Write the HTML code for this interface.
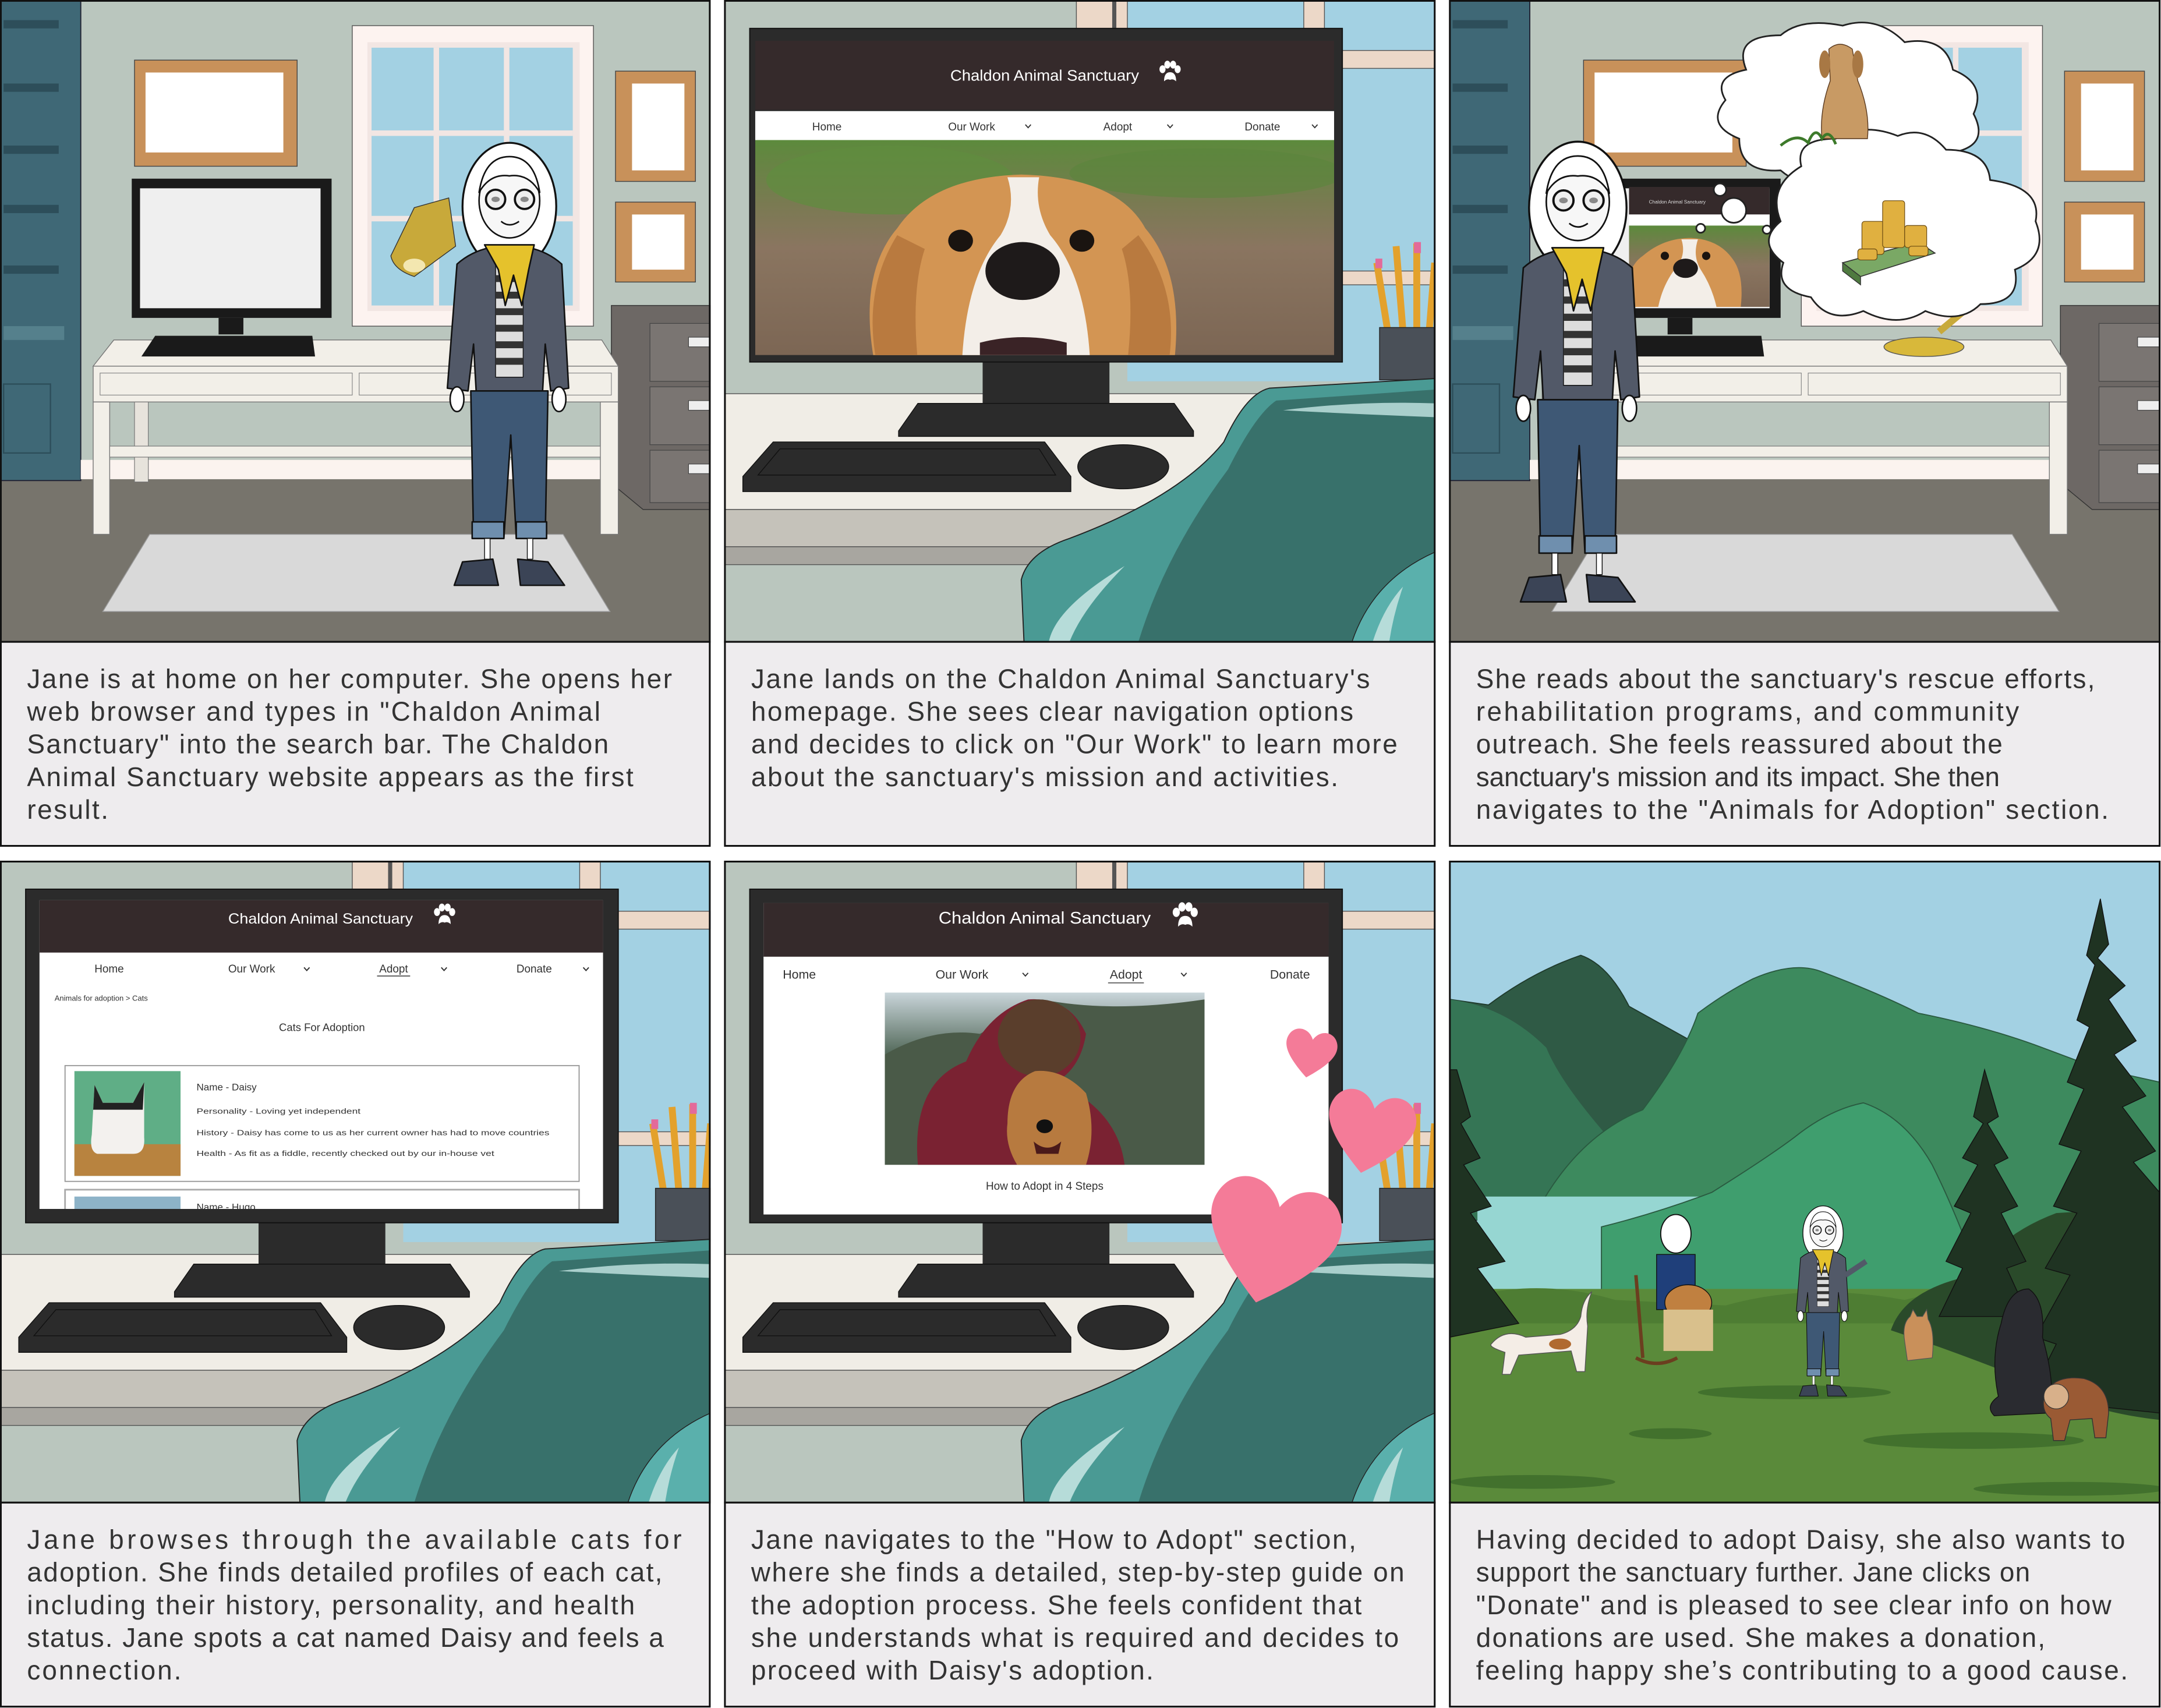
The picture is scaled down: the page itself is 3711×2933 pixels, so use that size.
<!DOCTYPE html>
<html><head><meta charset="utf-8"><style>
html,body{margin:0;padding:0;background:#fff}
svg{display:block}
.cap{font-family:"Liberation Sans",sans-serif;font-size:19.4px;fill:#333}
.ws{font-family:"Liberation Sans",sans-serif}
</style></head><body>
<svg xmlns="http://www.w3.org/2000/svg" xmlns:xlink="http://www.w3.org/1999/xlink" width="3711" height="2933" viewBox="0 0 1568 1239" preserveAspectRatio="none">
<defs>
<clipPath id="pc"><rect x="0" y="0" width="515" height="465"/></clipPath>
<clipPath id="dogc"><rect x="22" y="101" width="420" height="156"/></clipPath>
<clipPath id="s4"><rect x="28" y="28" width="409" height="224"/></clipPath>
<clipPath id="ph5"><rect x="116" y="95" width="232" height="125"/></clipPath>
<clipPath id="mini"><rect x="130" y="163" width="102" height="59"/></clipPath>
<linearGradient id="dogbg" x1="0" y1="0" x2="0" y2="1"><stop offset="0" stop-color="#5c8a3c"/><stop offset="0.3" stop-color="#7a7a52"/><stop offset="0.5" stop-color="#8a7560"/><stop offset="1" stop-color="#7c6654"/></linearGradient>
<linearGradient id="mtbg" x1="0" y1="0" x2="0" y2="1"><stop offset="0" stop-color="#c9d5da"/><stop offset="0.35" stop-color="#556b5c"/><stop offset="1" stop-color="#4a5a40"/></linearGradient>

<g id="paw" fill="#fff"><ellipse cx="-5" cy="-4" rx="2" ry="2.6"/><ellipse cx="-1.8" cy="-7" rx="2" ry="2.6"/><ellipse cx="2" cy="-7" rx="2" ry="2.6"/><ellipse cx="5" cy="-4" rx="2" ry="2.6"/><path d="M-4,4 Q-4,-2 0,-2 Q4,-2 4,4 Q2,2 0,3 Q-2,2 -4,4Z"/></g>

<g id="chev"><path d="M-2,-1.2 L0,1 L2,-1.2" fill="none" stroke="#333" stroke-width="0.8"/></g>

<g id="heart"><path d="M50,92 C12,62 0,42 8,24 C16,6 40,6 50,26 C60,6 84,6 92,24 C100,42 88,62 50,92 Z"/></g>

<!-- room (panels 1 & 3) -->
<g id="room">
<rect width="515" height="465" fill="#bac6be"/>
<rect y="347" width="515" height="118" fill="#77746c"/>
<rect x="0" y="0" width="58" height="348" fill="#3f6876" stroke="#223" stroke-width="0.8"/>
<rect x="2" y="14" width="40" height="6" fill="#2d4e5a"/>
<rect x="2" y="60" width="40" height="6" fill="#2d4e5a"/>
<rect x="2" y="105" width="40" height="6" fill="#2d4e5a"/>
<rect x="2" y="148" width="40" height="6" fill="#2d4e5a"/>
<rect x="2" y="192" width="40" height="6" fill="#2d4e5a"/>
<rect x="2" y="236" width="44" height="10" fill="#55808c"/>
<rect x="2" y="278" width="34" height="50" fill="none" stroke="#2d4e5a"/>
<rect x="58" y="333" width="400" height="14" fill="#fbf3ef"/>
<!-- window -->
<rect x="255" y="18" width="175" height="218" fill="#fdf3f0" stroke="#555" stroke-width="0.6"/>
<rect x="266" y="30" width="154" height="195" fill="#f2e6e3"/>
<rect x="269" y="34" width="146" height="187" fill="#a3d1e3"/>
<rect x="314" y="34" width="4" height="187" fill="#f2e6e3"/>
<rect x="365" y="34" width="4" height="187" fill="#f2e6e3"/>
<rect x="269" y="94" width="146" height="4" fill="#f2e6e3"/>
<rect x="269" y="156" width="146" height="4" fill="#f2e6e3"/>
<!-- frames -->
<rect x="97" y="43" width="118" height="77" fill="#c8915a" stroke="#444" stroke-width="0.6"/>
<rect x="105" y="52" width="100" height="58" fill="#fff"/>
<rect x="446" y="51" width="58" height="80" fill="#c8915a" stroke="#444" stroke-width="0.6"/>
<rect x="458" y="60" width="38" height="63" fill="#fff"/>
<rect x="446" y="146" width="58" height="58" fill="#c8915a" stroke="#444" stroke-width="0.6"/>
<rect x="458" y="155" width="38" height="40" fill="#fff"/>
<!-- cabinet -->
<path d="M443,221 L515,221 L515,369 L466,369 L443,350 Z" fill="#6d6865" stroke="#333" stroke-width="0.6"/>
<rect x="471" y="234" width="44" height="42" fill="#7a7572" stroke="#444" stroke-width="0.5"/>
<rect x="471" y="280" width="44" height="42" fill="#7a7572" stroke="#444" stroke-width="0.5"/>
<rect x="471" y="326" width="44" height="38" fill="#7a7572" stroke="#444" stroke-width="0.5"/>
<rect x="499" y="244" width="16" height="7" fill="#eee" stroke="#444" stroke-width="0.5"/>
<rect x="499" y="290" width="16" height="7" fill="#eee" stroke="#444" stroke-width="0.5"/>
<rect x="499" y="336" width="16" height="7" fill="#eee" stroke="#444" stroke-width="0.5"/>
<!-- monitor -->
<rect x="95" y="129" width="145" height="101" fill="#1a1a1a"/>
<rect x="101" y="136" width="131" height="87" fill="#efefef"/>
<rect x="158" y="230" width="18" height="12" fill="#1a1a1a"/>
<!-- desk -->
<path d="M82,246 L436,246 L448,265 L67,265 Z" fill="#f2efe8" stroke="#777" stroke-width="0.6"/>
<polygon points="102,258 228,258 226,243 112,243" fill="#1a1a1a"/>
<rect x="67" y="265" width="381" height="26" fill="#f2efe8" stroke="#777" stroke-width="0.6"/>
<rect x="72" y="270" width="183" height="16" fill="none" stroke="#888" stroke-width="0.5"/>
<rect x="260" y="270" width="183" height="16" fill="none" stroke="#888" stroke-width="0.5"/>
<rect x="67" y="291" width="12" height="96" fill="#f2efe8" stroke="#777" stroke-width="0.6"/>
<rect x="435" y="291" width="13" height="96" fill="#f2efe8" stroke="#777" stroke-width="0.6"/>
<rect x="97" y="291" width="10" height="58" fill="#e7e3dc" stroke="#777" stroke-width="0.5"/>
<rect x="79" y="323" width="356" height="8" fill="#f2efe8" stroke="#777" stroke-width="0.5"/>
<!-- rug -->
<polygon points="108,387 408,387 442,443 74,443" fill="#d9d9d9" stroke="#999" stroke-width="0.6"/>
</g>

<!-- desk scene (panels 2,4,5) -->
<g id="desk">
<rect width="515" height="465" fill="#bac6be"/>
<rect x="292" y="0" width="223" height="276" fill="#a3d1e3"/>
<rect x="255" y="0" width="37" height="22" fill="#ecd8c8" stroke="#555" stroke-width="0.6"/>
<rect x="281" y="0" width="3" height="22" fill="#555"/>
<rect x="420" y="0" width="15" height="22" fill="#ecd8c8" stroke="#555" stroke-width="0.6"/>
<rect x="448" y="36" width="67" height="13" fill="#ecd8c8" stroke="#555" stroke-width="0.6"/>
<rect x="448" y="196" width="67" height="10" fill="#ecd8c8" stroke="#555" stroke-width="0.6"/>
<line x1="481" y1="240" x2="473" y2="190" stroke="#e3a12c" stroke-width="5"/>
<line x1="492" y1="240" x2="487" y2="178" stroke="#e3a12c" stroke-width="5"/>
<line x1="502" y1="240" x2="502" y2="176" stroke="#e3a12c" stroke-width="5"/>
<line x1="511" y1="240" x2="515" y2="190" stroke="#e3a12c" stroke-width="5"/>
<rect x="472" y="187" width="5" height="7" fill="#e36a9a"/>
<rect x="500" y="175" width="5" height="8" fill="#e36a9a"/>
<rect x="475" y="237" width="40" height="38" fill="#4a5058" stroke="#222" stroke-width="0.6"/>
<rect x="0" y="285" width="515" height="84" fill="#f0ede6" stroke="#555" stroke-width="0.6"/>
<rect x="0" y="369" width="515" height="27" fill="#c5c2ba" stroke="#555" stroke-width="0.6"/>
<rect x="0" y="396" width="515" height="13" fill="#a8a6a0" stroke="#555" stroke-width="0.6"/>
<rect x="187" y="262" width="92" height="33" fill="#2b2b2b"/>
<polygon points="140,292 326,292 340,312 340,316 126,316 126,312" fill="#2b2b2b" stroke="#111" stroke-width="0.6"/>
<polygon points="35,320 232,320 251,345 251,356 13,356 13,345" fill="#2b2b2b" stroke="#111" stroke-width="0.6"/>
<polygon points="40,325 228,325 240,344 24,344" fill="none" stroke="#111" stroke-width="0.6"/>
<ellipse cx="289" cy="338" rx="33" ry="16" fill="#2b2b2b" stroke="#111" stroke-width="0.6"/>
<rect x="18" y="20" width="430" height="242" fill="#2b2b2b" stroke="#111" stroke-width="0.8"/>
<!-- chair -->
<path d="M217,465 L215,420 Q220,400 250,390 Q330,360 362,320 Q378,285 395,281 L515,274 L515,465 Z" fill="#4a9a94" stroke="#222" stroke-width="0.8"/>
<path d="M300,465 Q320,400 365,340 Q385,300 400,290 L515,282 L515,465 Z" fill="#38716b"/>
<path d="M405,297 Q460,290 515,292 L515,302 Q460,300 405,297Z" fill="#a9cfcc"/>
<path d="M235,465 Q240,440 290,410 Q260,440 250,465Z" fill="#b6dcd9"/>
<path d="M455,465 Q470,420 515,400 L515,465 Z" fill="#5ab0ac" stroke="#222" stroke-width="0.6"/>
<path d="M470,465 Q478,440 492,425 Q485,445 482,465Z" fill="#b6dcd9"/>
</g>

<!-- Jane -->
<g id="jane" stroke="#111" stroke-width="1.1" stroke-linejoin="round">
<ellipse cx="46" cy="50" rx="34" ry="46" fill="#fff" stroke-width="1.4"/>
<ellipse cx="46" cy="46" rx="22" ry="27" fill="#f7f7f7"/>
<path d="M24,40 Q28,14 46,14 Q64,14 68,40 Q60,26 46,28 Q32,26 24,40Z" fill="#fff"/>
<circle cx="36" cy="45" r="7" fill="#eee" stroke-width="1.6"/>
<circle cx="57" cy="45" r="7" fill="#eee" stroke-width="1.6"/>
<ellipse cx="36" cy="45" rx="3" ry="2" fill="#888" stroke="none"/>
<ellipse cx="57" cy="45" rx="3" ry="2" fill="#888" stroke="none"/>
<path d="M40,61 Q46,66 53,61" fill="none"/>
<path d="M8,92 Q18,83 32,80 L60,80 Q74,83 84,92 L89,182 L76,184 L72,150 L70,186 L22,186 L20,150 L16,184 L1,182 Z" fill="#525968"/>
<rect x="36" y="88" width="20" height="86" fill="#ddd" stroke-width="0.6"/>
<g fill="#333" stroke="none"><rect x="36" y="100" width="20" height="5"/><rect x="36" y="112" width="20" height="5"/><rect x="36" y="124" width="20" height="5"/><rect x="36" y="136" width="20" height="5"/><rect x="36" y="148" width="20" height="5"/><rect x="36" y="160" width="20" height="5"/></g>
<path d="M28,78 L64,78 L60,96 L55,122 L49,100 L43,122 L38,96Z" fill="#e5c22c"/>
<ellipse cx="8" cy="190" rx="5" ry="9" fill="#fff"/>
<ellipse cx="82" cy="190" rx="5" ry="9" fill="#fff"/>
<path d="M18,184 L74,184 L72,291 L51,291 L47,216 L42,291 L20,291 Z" fill="#3e5875"/>
<rect x="19" y="279" width="23" height="12" fill="#6f8fae"/>
<rect x="51" y="279" width="22" height="12" fill="#6f8fae"/>
<rect x="28" y="291" width="4" height="15" fill="#fff" stroke-width="0.6"/>
<rect x="59" y="291" width="4" height="15" fill="#fff" stroke-width="0.6"/>
<path d="M6,325 L12,308 L34,306 L38,325 Z" fill="#3b4456"/>
<path d="M52,306 L74,308 L86,325 L54,325 Z" fill="#3b4456"/>
</g>

<g id="cloud" fill="#fff" stroke="#222" stroke-width="1.2">
<circle cx="0" cy="0" r="1"/>
</g>
</defs>

<!-- ================= PANEL 1 ================= -->
<g transform="translate(0.6,0.6)">
<g clip-path="url(#pc)">
<use xlink:href="#room"/>
<!-- lamp -->
<path d="M300,150 L325,143 L330,178 L300,200 Q285,195 283,185 Z" fill="#c8a93a" stroke="#333" stroke-width="0.6"/>
<ellipse cx="300" cy="192" rx="8" ry="5" fill="#f3e7b0"/>
<use xlink:href="#jane" transform="translate(323,99)"/>
</g>
<rect width="514.4" height="465" fill="none" stroke="#111" stroke-width="1.3"/>
<rect y="465" width="514.4" height="148" fill="#eeecee" stroke="#111" stroke-width="1.3"/>
<text class="cap" x="19" y="498.5" textLength="468" lengthAdjust="spacing">Jane is at home on her computer. She opens her</text>
<text class="cap" x="19" y="522.2" textLength="416" lengthAdjust="spacing">web browser and types in "Chaldon Animal</text>
<text class="cap" x="19" y="545.9" textLength="422" lengthAdjust="spacing">Sanctuary" into the search bar. The Chaldon</text>
<text class="cap" x="19" y="569.6" textLength="440" lengthAdjust="spacing">Animal Sanctuary website appears as the first</text>
<text class="cap" x="19" y="593.3" textLength="59" lengthAdjust="spacing">result.</text>
</g>

<!-- ================= PANEL 2 ================= -->
<g transform="translate(526,0.6)">
<g clip-path="url(#pc)">
<use xlink:href="#desk"/>
<rect x="22" y="29" width="420" height="50" fill="#352a2b"/>
<text class="ws" x="232" y="58" font-size="11" fill="#fff" text-anchor="middle" textLength="137" lengthAdjust="spacingAndGlyphs">Chaldon Animal Sanctuary</text>
<use xlink:href="#paw" transform="translate(323,54) scale(1.1)"/>
<rect x="22" y="80" width="420" height="21" fill="#fff"/>
<g class="ws" font-size="8" fill="#333" text-anchor="middle">
<text x="74" y="94">Home</text><text x="179" y="94">Our Work</text><text x="285" y="94">Adopt</text><text x="390" y="94">Donate</text></g>
<use xlink:href="#chev" transform="translate(220,91)"/><use xlink:href="#chev" transform="translate(323,91)"/><use xlink:href="#chev" transform="translate(428,91)"/>
<g clip-path="url(#dogc)">
<rect x="22" y="101" width="420" height="156" fill="url(#dogbg)"/>
<ellipse cx="120" cy="130" rx="90" ry="25" fill="#5f8d3e" opacity="0.7"/>
<ellipse cx="350" cy="125" rx="100" ry="18" fill="#5a853c" opacity="0.6"/>
<path d="M110,270 Q95,200 125,165 Q150,128 215,126 Q285,128 305,165 Q335,200 325,270 Z" fill="#d39553"/>
<path d="M125,170 Q100,210 110,262 L140,262 Q135,210 145,180Z" fill="#b97a3f"/>
<path d="M300,170 Q330,210 322,262 L292,262 Q298,210 288,180Z" fill="#b97a3f"/>
<path d="M205,128 Q212,150 200,170 Q175,200 172,262 L265,262 Q262,200 236,170 Q224,150 228,128Z" fill="#f3eee8"/>
<ellipse cx="216" cy="196" rx="27" ry="21" fill="#1e1a1a"/>
<ellipse cx="171" cy="174" rx="9" ry="8" fill="#1a1410"/>
<ellipse cx="259" cy="174" rx="9" ry="8" fill="#1a1410"/>
<path d="M185,248 Q216,240 248,248 L248,262 L185,262Z" fill="#3a2326"/>
</g>
</g>
<rect width="515" height="465" fill="none" stroke="#111" stroke-width="1.3"/>
<rect y="465" width="515" height="148" fill="#eeecee" stroke="#111" stroke-width="1.3"/>
<text class="cap" x="19" y="498.5" textLength="449" lengthAdjust="spacing">Jane lands on the Chaldon Animal Sanctuary's</text>
<text class="cap" x="19" y="522.2" textLength="437" lengthAdjust="spacing">homepage. She sees clear navigation options</text>
<text class="cap" x="19" y="545.9" textLength="469" lengthAdjust="spacing">and decides to click on "Our Work" to learn more</text>
<text class="cap" x="19" y="569.6" textLength="426" lengthAdjust="spacing">about the sanctuary's mission and activities.</text>
</g>

<!-- ================= PANEL 3 ================= -->
<g transform="translate(1052,0.6)">
<g clip-path="url(#pc)">
<use xlink:href="#room"/>
<!-- mini site on monitor -->
<rect x="130" y="135" width="102" height="20" fill="#352a2b"/>
<text class="ws" x="165" y="147" font-size="3.5" fill="#ddd" text-anchor="middle">Chaldon Animal Sanctuary</text>
<rect x="130" y="155" width="102" height="8" fill="#fff"/>
<g clip-path="url(#mini)">
<rect x="130" y="163" width="102" height="59" fill="url(#dogbg)"/>
<path d="M128,230 Q125,195 140,185 Q155,172 175,172 Q195,173 205,187 Q215,200 210,230Z" fill="#d39553"/>
<path d="M168,173 Q172,185 163,195 Q152,210 150,230 L195,230 Q192,210 182,195 Q176,185 180,173Z" fill="#f3eee8"/>
<ellipse cx="171" cy="194" rx="9" ry="7" fill="#1e1a1a"/>
<circle cx="156" cy="185" r="3" fill="#1a1410"/><circle cx="186" cy="185" r="3" fill="#1a1410"/>
</g>
<!-- lamp base -->
<path d="M355,240 L385,215" stroke="#c8a93a" stroke-width="5"/>
<ellipse cx="344" cy="251" rx="29" ry="7" fill="#d8b83a" stroke="#555" stroke-width="0.6"/>
<!-- thought bubbles -->
<g fill="#fff" stroke="#222" stroke-width="1.2">
<circle cx="196" cy="137" r="4.5"/><circle cx="206" cy="152" r="9"/><circle cx="182" cy="165" r="3.2"/><circle cx="230" cy="166" r="3"/>
<path d="M215,50 Q205,25 240,25 Q255,12 285,18 Q310,10 330,30 Q360,25 365,50 Q390,60 380,82 Q392,105 365,110 Q360,130 330,125 Q310,140 285,128 Q260,140 240,123 Q210,125 210,100 Q185,90 200,72 Q190,55 215,50Z"/>
<path d="M255,120 Q250,100 280,100 Q300,88 325,98 Q345,90 360,108 Q390,108 392,130 Q430,135 425,160 Q435,185 410,195 Q415,220 385,220 Q370,235 345,225 Q325,238 300,225 Q275,235 262,215 Q235,210 242,190 Q222,175 240,160 Q230,135 255,120Z"/>
</g>
<!-- dog in bubble -->
<path d="M275,35 Q283,28 292,35 L296,58 Q305,80 303,100 L270,100 Q268,80 276,58Z" fill="#c89a64" stroke="#5a3a20" stroke-width="0.6"/>
<ellipse cx="272" cy="46" rx="4" ry="10" fill="#a87844"/><ellipse cx="296" cy="46" rx="4" ry="10" fill="#a87844"/>
<path d="M240,105 Q252,95 260,103 Q265,90 270,100 Q275,92 280,104" fill="none" stroke="#3d7a2a" stroke-width="2"/>
<!-- money -->
<path d="M285,190 L340,175 L352,183 L298,200Z" fill="#7aa865" stroke="#333" stroke-width="0.7"/>
<path d="M285,190 L298,200 L298,206 L285,196Z" fill="#4f7a40" stroke="#333" stroke-width="0.6"/>
<g fill="#e0b040" stroke="#6a4a10" stroke-width="0.5">
<rect x="299" y="160" width="16" height="24" rx="2"/><rect x="314" y="145" width="16" height="34" rx="2"/><rect x="330" y="163" width="16" height="16" rx="2"/><rect x="296" y="180" width="14" height="8" rx="2"/><rect x="333" y="178" width="14" height="7" rx="2"/>
</g>
<use xlink:href="#jane" transform="translate(45,98) scale(1.04)"/>
</g>
<rect width="515" height="465" fill="none" stroke="#111" stroke-width="1.3"/>
<rect y="465" width="515" height="148" fill="#eeecee" stroke="#111" stroke-width="1.3"/>
<text class="cap" x="19" y="498.5" textLength="449" lengthAdjust="spacing">She reads about the sanctuary's rescue efforts,</text>
<text class="cap" x="19" y="522.2" textLength="394" lengthAdjust="spacing">rehabilitation programs, and community</text>
<text class="cap" x="19" y="545.9" textLength="382" lengthAdjust="spacing">outreach. She feels reassured about the</text>
<text class="cap" x="19" y="569.6" textLength="380" lengthAdjust="spacing">sanctuary's mission and its impact. She then</text>
<text class="cap" x="19" y="593.3" textLength="459" lengthAdjust="spacing">navigates to the "Animals for Adoption" section.</text>
</g>

<!-- ================= PANEL 4 ================= -->
<g transform="translate(0.6,625)">
<g clip-path="url(#pc)">
<use xlink:href="#desk"/>
<g clip-path="url(#s4)">
<rect x="28" y="28" width="409" height="224" fill="#fff"/>
<rect x="28" y="28" width="409" height="38" fill="#352a2b"/>
<text class="ws" x="232" y="45" font-size="10.5" fill="#fff" text-anchor="middle" textLength="134" lengthAdjust="spacingAndGlyphs">Chaldon Animal Sanctuary</text>
<use xlink:href="#paw" transform="translate(322,41) scale(1.1)"/>
<g class="ws" font-size="8" fill="#333" text-anchor="middle">
<text x="78.6" y="80.5">Home</text><text x="182" y="80.5">Our Work</text><text x="285" y="80.5">Adopt</text><text x="387" y="80.5">Donate</text></g>
<line x1="273" y1="83" x2="297" y2="83" stroke="#333" stroke-width="0.6"/>
<use xlink:href="#chev" transform="translate(222,78)"/><use xlink:href="#chev" transform="translate(321.6,78)"/><use xlink:href="#chev" transform="translate(424.6,78)"/>
<text class="ws" x="39" y="101" font-size="5.5" fill="#333">Animals for adoption &gt; Cats</text>
<text class="ws" x="233" y="123" font-size="7.8" fill="#333" text-anchor="middle">Cats For Adoption</text>
<rect x="46.6" y="148" width="373" height="84" fill="#fff" stroke="#999" stroke-width="0.8"/>
<rect x="53.4" y="152" width="77" height="76" fill="#5fae86"/>
<rect x="53.4" y="205" width="77" height="23" fill="#b8833f"/>
<path d="M68,162 L74,175 L96,175 L104,160 L104,200 Q105,212 96,212 L70,212 Q64,210 66,198Z" fill="#f3f1ee"/>
<path d="M68,162 L74,175 L96,175 L104,160 L103,180 L67,180Z" fill="#222"/>
<g class="ws" fill="#333"><text x="142" y="166" font-size="7.2">Name - Daisy</text>
<text x="142" y="183" font-size="5.6" textLength="119" lengthAdjust="spacingAndGlyphs">Personality - Loving yet independent</text>
<text x="142" y="198.5" font-size="5.6" textLength="256" lengthAdjust="spacingAndGlyphs">History - Daisy has come to us as her current owner has had to move countries</text>
<text x="142" y="213.5" font-size="5.6" textLength="216" lengthAdjust="spacingAndGlyphs">Health - As fit as a fiddle, recently checked out by our in-house vet</text></g>
<rect x="46.6" y="238" width="373" height="30" fill="#fff" stroke="#aaa" stroke-width="1.2"/>
<rect x="53.4" y="243" width="77" height="20" fill="#8db3c8"/>
<text class="ws" x="142" y="253" font-size="7.2" fill="#333">Name - Hugo</text>
</g>
</g>
<rect width="514.4" height="465" fill="none" stroke="#111" stroke-width="1.3"/>
<rect y="465" width="514.4" height="148" fill="#eeecee" stroke="#111" stroke-width="1.3"/>
<text class="cap" x="19" y="498.5" textLength="475" lengthAdjust="spacing">Jane browses through the available cats for</text>
<text class="cap" x="19" y="522.2" textLength="461" lengthAdjust="spacing">adoption. She finds detailed profiles of each cat,</text>
<text class="cap" x="19" y="545.9" textLength="441" lengthAdjust="spacing">including their history, personality, and health</text>
<text class="cap" x="19" y="569.6" textLength="462" lengthAdjust="spacing">status. Jane spots a cat named Daisy and feels a</text>
<text class="cap" x="19" y="593.3" textLength="112" lengthAdjust="spacing">connection.</text>
</g>

<!-- ================= PANEL 5 ================= -->
<g transform="translate(526,625)">
<g clip-path="url(#pc)">
<use xlink:href="#desk"/>
<rect x="28" y="30" width="410" height="226" fill="#fff"/>
<rect x="28" y="30" width="410" height="39" fill="#352a2b"/>
<text class="ws" x="232" y="45" font-size="12" fill="#fff" text-anchor="middle" textLength="154" lengthAdjust="spacingAndGlyphs">Chaldon Animal Sanctuary</text>
<use xlink:href="#paw" transform="translate(334,42) scale(1.3)"/>
<g class="ws" font-size="9" fill="#333" text-anchor="middle">
<text x="54" y="85">Home</text><text x="172" y="85">Our Work</text><text x="291" y="85">Adopt</text><text x="410" y="85">Donate</text></g>
<line x1="278" y1="88" x2="304" y2="88" stroke="#333" stroke-width="0.6"/>
<use xlink:href="#chev" transform="translate(218,82)"/><use xlink:href="#chev" transform="translate(333,82)"/>
<g clip-path="url(#ph5)">
<rect x="116" y="95" width="232" height="125" fill="url(#mtbg)"/>
<path d="M116,140 Q150,120 185,125 L230,100 Q280,110 348,100 L348,220 L116,220Z" fill="#4a5a48"/>
<path d="M140,220 Q135,160 175,145 Q190,110 220,100 Q250,98 262,125 Q258,150 240,160 Q285,180 290,220Z" fill="#7a2232"/>
<ellipse cx="228" cy="128" rx="30" ry="28" fill="#5a3e2c"/>
<path d="M205,190 Q205,160 225,152 Q245,150 262,168 Q270,195 262,220 L212,220 Q203,205 205,190Z" fill="#b77a3f"/>
<ellipse cx="232" cy="192" rx="6" ry="5" fill="#111"/>
<path d="M224,203 Q234,212 244,203 L242,212 L226,212Z" fill="#4a1a1a"/>
</g>
<text class="ws" x="232" y="238" font-size="8" fill="#333" text-anchor="middle">How to Adopt in 4 Steps</text>
<g fill="#f47b98">
<use xlink:href="#heart" transform="translate(404,118) rotate(10 20 20) scale(0.42)"/>
<use xlink:href="#heart" transform="translate(432,160) rotate(12 35 35) scale(0.72)"/>
<use xlink:href="#heart" transform="translate(342,222) rotate(14 55 55) scale(1.08)"/>
</g>
</g>
<rect width="515" height="465" fill="none" stroke="#111" stroke-width="1.3"/>
<rect y="465" width="515" height="148" fill="#eeecee" stroke="#111" stroke-width="1.3"/>
<text class="cap" x="19" y="498.5" textLength="439" lengthAdjust="spacing">Jane navigates to the "How to Adopt" section,</text>
<text class="cap" x="19" y="522.2" textLength="474" lengthAdjust="spacing">where she finds a detailed, step-by-step guide on</text>
<text class="cap" x="19" y="545.9" textLength="443" lengthAdjust="spacing">the adoption process. She feels confident that</text>
<text class="cap" x="19" y="569.6" textLength="470" lengthAdjust="spacing">she understands what is required and decides to</text>
<text class="cap" x="19" y="593.3" textLength="292" lengthAdjust="spacing">proceed with Daisy's adoption.</text>
</g>

<!-- ================= PANEL 6 ================= -->
<g transform="translate(1052,625)">
<g clip-path="url(#pc)">
<rect width="515" height="465" fill="#a3d1e3"/>
<path d="M0,100 L28,104 Q60,80 95,68 Q115,75 130,105 L175,130 L180,260 L0,260Z" fill="#2f5a45" stroke="#1f3a2c" stroke-width="0.8"/>
<path d="M0,100 Q40,105 70,135 Q80,160 115,200 L100,260 L0,260Z" fill="#357555"/>
<path d="M60,260 Q90,200 140,180 Q170,140 180,110 Q200,95 220,85 Q250,72 270,80 Q310,95 340,110 Q390,120 430,135 L470,150 L515,160 L515,320 L60,320Z" fill="#3d8a5e" stroke="#2a5a40" stroke-width="0.8"/>
<rect x="20" y="243" width="180" height="75" fill="#96d6d2"/>
<path d="M110,265 Q150,255 190,240 Q230,215 250,200 Q275,180 300,175 Q330,185 350,220 Q365,250 380,290 L380,330 L110,330Z" fill="#3f9e6e" stroke="#2a5a40" stroke-width="0.8"/>
<rect x="0" y="310" width="515" height="155" fill="#5a8a3a"/>
<path d="M0,320 Q60,300 120,318 L200,322 Q260,305 330,318 Q400,300 515,305 L515,335 L0,335Z" fill="#4e7d33"/>
<g fill="#3c6a2a" opacity="0.8"><ellipse cx="60" cy="450" rx="60" ry="5"/><ellipse cx="380" cy="420" rx="80" ry="6"/><ellipse cx="160" cy="415" rx="30" ry="4"/><ellipse cx="450" cy="455" rx="70" ry="5"/><ellipse cx="250" cy="385" rx="70" ry="5"/></g>
<!-- right dark foliage -->
<path d="M320,340 Q330,310 380,300 Q400,270 440,255 L515,250 L515,405 Q470,400 440,385 Q380,360 320,340Z" fill="#2a4a2a"/>
<!-- trees -->
<g fill="#1f3322" stroke="#111" stroke-width="0.6">
<path d="M5,151 L15,185 L8,190 L22,215 L10,220 L30,250 L15,255 L40,290 L20,295 L50,335 L0,345 L0,151Z"/>
<path d="M388,151 L398,185 L390,190 L405,215 L395,220 L412,250 L400,255 L418,290 L404,295 L420,330 L355,330 L372,295 L360,290 L378,255 L366,250 L383,220 L372,215 L387,190 L380,185Z"/>
<path d="M472,27 L478,60 L470,70 L490,90 L478,100 L498,130 L482,140 L505,170 L488,178 L512,210 L496,218 L515,240 L515,400 L420,390 L440,350 L425,345 L450,300 L432,295 L455,255 L438,250 L458,210 L442,205 L460,165 L448,160 L464,120 L455,115 L468,75 L462,68Z"/>
</g>
<!-- old lady + chair -->
<path d="M135,300 L140,360 M135,360 Q150,368 165,360" stroke="#6b3e1f" stroke-width="2.5" fill="none"/>
<rect x="150" y="285" width="28" height="40" fill="#1f3f7a" stroke="#111" stroke-width="0.6"/>
<ellipse cx="164" cy="270" rx="11" ry="14" fill="#fff" stroke="#111" stroke-width="0.8"/>
<ellipse cx="173" cy="320" rx="17" ry="13" fill="#c08040" stroke="#111" stroke-width="0.6"/>
<rect x="155" y="325" width="36" height="30" fill="#d9c08c"/>
<!-- Jane small -->
<use xlink:href="#jane" transform="translate(251,248) scale(0.43)"/>
<path d="M287,300 L302,290" stroke="#525968" stroke-width="4"/>
<!-- cat left -->
<path d="M30,350 Q40,338 55,345 L80,343 Q92,340 95,330 Q96,318 103,312 Q98,325 100,337 L98,370 L92,370 L88,355 L50,358 L44,372 L38,372 L40,356 Q28,352 30,350Z" fill="#f4ede6" stroke="#555" stroke-width="0.6"/>
<ellipse cx="80" cy="350" rx="8" ry="4" fill="#b06a30"/>
<!-- small cat -->
<path d="M330,348 Q328,335 334,330 L336,325 L339,330 L343,330 L346,325 L347,332 Q352,340 350,360 L332,362Z" fill="#c9905a" stroke="#555" stroke-width="0.5"/>
<!-- dogs right -->
<path d="M400,335 Q405,310 420,310 Q432,318 430,345 Q440,380 435,400 L395,402 Q388,395 398,388 Q392,360 400,335Z" fill="#2a2b30" stroke="#111" stroke-width="0.6"/>
<path d="M432,385 Q440,372 460,375 Q478,380 478,400 L476,418 L468,418 L466,404 L450,405 L446,420 L438,420 L436,404 Q428,398 432,385Z" fill="#9a5a34" stroke="#333" stroke-width="0.6"/>
<ellipse cx="440" cy="388" rx="9" ry="9" fill="#d8b08a" stroke="#333" stroke-width="0.5"/>
</g>
<rect width="515" height="465" fill="none" stroke="#111" stroke-width="1.3"/>
<rect y="465" width="515" height="148" fill="#eeecee" stroke="#111" stroke-width="1.3"/>
<text class="cap" x="19" y="498.5" textLength="471" lengthAdjust="spacing">Having decided to adopt Daisy, she also wants to</text>
<text class="cap" x="19" y="522.2" textLength="402" lengthAdjust="spacing">support the sanctuary further. Jane clicks on</text>
<text class="cap" x="19" y="545.9" textLength="461" lengthAdjust="spacing">"Donate" and is pleased to see clear info on how</text>
<text class="cap" x="19" y="569.6" textLength="413" lengthAdjust="spacing">donations are used. She makes a donation,</text>
<text class="cap" x="19" y="593.3" textLength="473" lengthAdjust="spacing">feeling happy she’s contributing to a good cause.</text>
</g>
</svg>
</body></html>
